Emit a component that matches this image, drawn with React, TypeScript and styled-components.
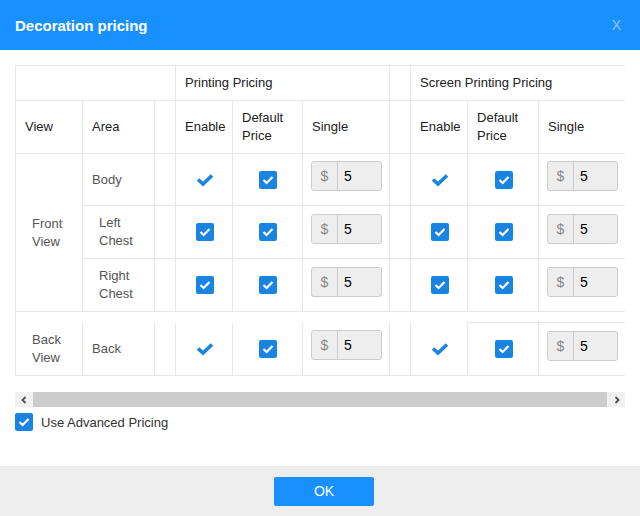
import React from "react";
import styled, { createGlobalStyle } from "styled-components";

const GlobalStyle = createGlobalStyle`
  html, body { margin: 0; padding: 0; background: #fff; }
  body { font-family: "Liberation Sans", Arial, sans-serif; font-size: 13px; color: #222; }
  * { box-sizing: border-box; }
`;

const Dialog = styled.div`
  width: 640px;
  height: 516px;
  display: flex;
  flex-direction: column;
  background: #fff;
`;

const Header = styled.header`
  height: 50px;
  flex: none;
  background: #1890ff;
  display: flex;
  align-items: center;
  justify-content: space-between;
  padding: 0 19px 0 15px;
`;

const Title = styled.h1`
  margin: 0;
  font-size: 15px;
  font-weight: 700;
  color: #fff;
`;

const Close = styled.span`
  font-size: 14px;
  color: rgba(255, 255, 255, 0.5);
  cursor: pointer;
`;

const Body = styled.main`
  flex: 1;
  padding: 15px 15px 0 15px;
`;

const Scroller = styled.div`
  width: 610px;
  overflow: hidden;
`;

const Table = styled.table`
  border-collapse: collapse;
  table-layout: fixed;
  width: 615px;
  margin-bottom: 16px;
  font-size: 13px;
  line-height: 18px;
`;

const Row = styled.tr<{ $h: number }>`
  height: ${(p) => p.$h}px;
`;

const Cell = styled.td<{
  $center?: boolean;
  $muted?: boolean;
  $pl?: number;
  $noTop?: boolean;
}>`
  border: 1px solid #e6e6e6;
  ${(p) => (p.$noTop ? "border-top: none;" : "")}
  padding: 0 8px 0 ${(p) => (p.$pl ?? 9)}px;
  text-align: ${(p) => (p.$center ? "center" : "left")};
  vertical-align: middle;
  color: ${(p) => (p.$muted ? "#555" : "#222")};
  font-weight: 400;
`;

const HeadCell = styled(Cell).attrs({ as: "th" })``;

const GapCell = styled.td`
  height: 11px;
  padding: 0;
  border-top: 1px solid #e6e6e6;
  border-left: 1px solid #e6e6e6;
  border-right: none;
  border-bottom: none;
`;

const Box = styled.span`
  display: inline-flex;
  align-items: center;
  justify-content: center;
  width: 18px;
  height: 18px;
  border-radius: 2px;
  background: #1a84e2;
  vertical-align: middle;
`;

const Tick = styled.svg`
  display: inline-block;
  vertical-align: middle;
`;

const InputGroup = styled.div`
  display: flex;
  width: 71px;
  height: 30px;
  margin-top: -7px;
  border: 1px solid #ccc;
  border-radius: 3px;
  background: #eee;
  font-size: 14px;
`;

const Addon = styled.span`
  width: 26px;
  flex: none;
  display: flex;
  align-items: center;
  justify-content: center;
  color: #888;
  border-right: 1px solid #ccc;
`;

const Value = styled.span`
  flex: 1;
  display: flex;
  align-items: center;
  padding-left: 6px;
  color: #000;
`;

const ScrollBar = styled.div`
  width: 610px;
  height: 15px;
  display: flex;
  background: #f1f1f1;
`;

const ScrollButton = styled.span`
  width: 17px;
  flex: none;
  display: flex;
  align-items: center;
  justify-content: center;
`;

const Thumb = styled.span`
  flex: 1;
  background: #cdcdcd;
  margin: 0 1px;
`;

const OptionRow = styled.label`
  display: flex;
  align-items: center;
  gap: 8px;
  margin-top: 6px;
  color: #333;
  font-size: 13px;
`;

const Footer = styled.footer`
  height: 50px;
  flex: none;
  background: #eeeeee;
  display: flex;
  align-items: center;
  justify-content: center;
  padding-left: 8px;
`;

const OkButton = styled.button`
  width: 100px;
  height: 29px;
  border: none;
  border-radius: 2px;
  background: #1890ff;
  color: #fff;
  font-family: "Liberation Sans", Arial, sans-serif;
  font-size: 14px;
  cursor: pointer;
`;

const Checkbox = () => (
  <Box>
    <svg width="12" height="10" viewBox="0 0 12 10">
      <polyline points="1.5,5 4.6,8 10.5,2" fill="none" stroke="#fff" strokeWidth="2.2" />
    </svg>
  </Box>
);

const BareTick = () => (
  <Tick width="18" height="14" viewBox="0 0 18 14">
    <polyline points="2,6.5 7,11 16,2.5" fill="none" stroke="#1a84e2" strokeWidth="3.6" />
  </Tick>
);

const Chevron = ({ dir }: { dir: "left" | "right" }) => (
  <svg width="6" height="8" viewBox="0 0 6 8">
    <polyline
      points={dir === "left" ? "4.5,1 1.5,4 4.5,7" : "1.5,1 4.5,4 1.5,7"}
      fill="none"
      stroke="#505050"
      strokeWidth="1.8"
    />
  </svg>
);

const Price = ({ v }: { v: string }) => (
  <InputGroup>
    <Addon>$</Addon>
    <Value>{v}</Value>
  </InputGroup>
);

type RowData = {
  area: React.ReactNode;
  pl: number;
  enableBox: boolean;
  h: number;
};

const frontRows: RowData[] = [
  { area: "Body", pl: 9, enableBox: false, h: 52 },
  { area: "Left Chest", pl: 16, enableBox: true, h: 53 },
  { area: "Right Chest", pl: 16, enableBox: true, h: 53 },
];

export default function App() {
  return (
    <>
      <GlobalStyle />
      <Dialog>
        <Header>
          <Title>Decoration pricing</Title>
          <Close>X</Close>
        </Header>
        <Body>
          <Scroller>
            <Table>
              <colgroup>
                <col style={{ width: 67 }} />
                <col style={{ width: 72 }} />
                <col style={{ width: 21 }} />
                <col style={{ width: 57 }} />
                <col style={{ width: 70 }} />
                <col style={{ width: 87 }} />
                <col style={{ width: 21 }} />
                <col style={{ width: 57 }} />
                <col style={{ width: 71 }} />
                <col style={{ width: 92 }} />
              </colgroup>
              <thead>
                <Row $h={35}>
                  <HeadCell colSpan={3} />
                  <HeadCell colSpan={3}>Printing Pricing</HeadCell>
                  <HeadCell />
                  <HeadCell colSpan={3}>Screen Printing Pricing</HeadCell>
                </Row>
                <Row $h={53}>
                  <HeadCell>View</HeadCell>
                  <HeadCell>Area</HeadCell>
                  <HeadCell />
                  <HeadCell>Enable</HeadCell>
                  <HeadCell>Default Price</HeadCell>
                  <HeadCell>Single</HeadCell>
                  <HeadCell />
                  <HeadCell>Enable</HeadCell>
                  <HeadCell>Default Price</HeadCell>
                  <HeadCell>Single</HeadCell>
                </Row>
              </thead>
              <tbody>
                {frontRows.map((r, i) => (
                  <Row $h={r.h} key={i}>
                    {i === 0 && (
                      <Cell rowSpan={3} $muted $pl={16}>
                        Front View
                      </Cell>
                    )}
                    <Cell $muted $pl={r.pl}>
                      {r.area}
                    </Cell>
                    <Cell />
                    <Cell $center>{r.enableBox ? <Checkbox /> : <BareTick />}</Cell>
                    <Cell $center>
                      <Checkbox />
                    </Cell>
                    <Cell $pl={8}>
                      <Price v="5" />
                    </Cell>
                    <Cell />
                    <Cell $center>{r.enableBox ? <Checkbox /> : <BareTick />}</Cell>
                    <Cell $center>
                      <Checkbox />
                    </Cell>
                    <Cell $pl={8}>
                      <Price v="5" />
                    </Cell>
                  </Row>
                ))}
                <tr>
                  <GapCell colSpan={10} />
                </tr>
                <Row $h={53}>
                  <Cell $muted $pl={16} $noTop>
                    Back View
                  </Cell>
                  <Cell $muted $noTop>
                    Back
                  </Cell>
                  <Cell $noTop />
                  <Cell $center $noTop>
                    <BareTick />
                  </Cell>
                  <Cell $center $noTop>
                    <Checkbox />
                  </Cell>
                  <Cell $pl={8} $noTop>
                    <Price v="5" />
                  </Cell>
                  <Cell $noTop />
                  <Cell $center $noTop>
                    <BareTick />
                  </Cell>
                  <Cell $center>
                    <Checkbox />
                  </Cell>
                  <Cell $pl={8}>
                    <Price v="5" />
                  </Cell>
                </Row>
              </tbody>
            </Table>
          </Scroller>
          <ScrollBar>
            <ScrollButton>
              <Chevron dir="left" />
            </ScrollButton>
            <Thumb />
            <ScrollButton>
              <Chevron dir="right" />
            </ScrollButton>
          </ScrollBar>
          <OptionRow>
            <Checkbox />
            Use Advanced Pricing
          </OptionRow>
        </Body>
        <Footer>
          <OkButton>OK</OkButton>
        </Footer>
      </Dialog>
    </>
  );
}
